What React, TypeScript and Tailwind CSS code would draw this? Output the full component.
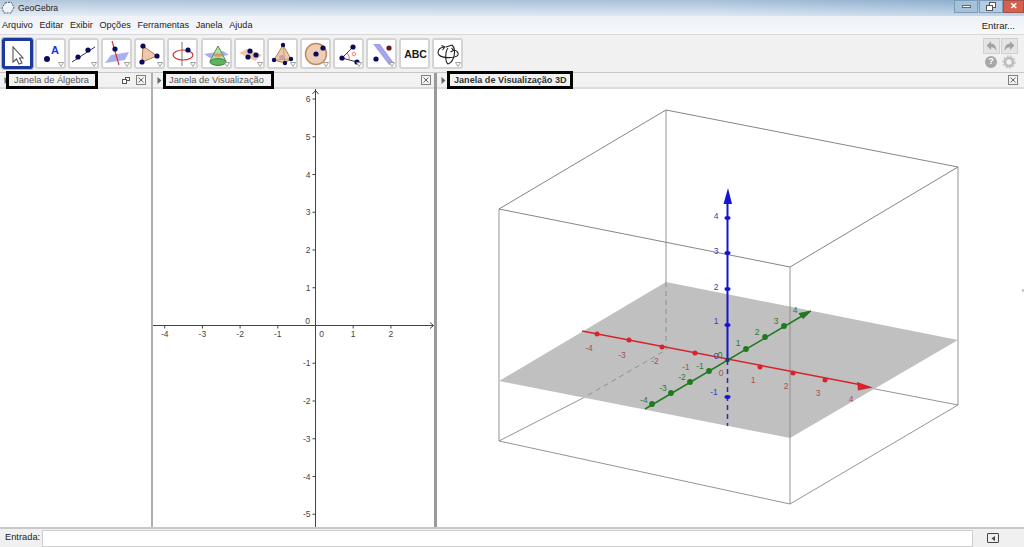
import React from "react";

const N = "#0b0b5e";
const Dot = ({ x, y, r = 2.6, c = N }: { x: number; y: number; r?: number; c?: string }) => <circle cx={x} cy={y} r={r} fill={c} />;

const icons: React.ReactNode[] = [
  <path key="a" d="M11 9 L11 24 L14.5 21 L17 26 L20 25 L17.5 20 L21 20 Z" fill="#fff" stroke="#555" strokeWidth="1.1" />,
  <g key="b"><Dot x={12} y={21} r={3} /><text x={20} y={16} textAnchor="middle" fontSize="11" fontWeight="700" fill="#2036d8" fontFamily="Liberation Sans">A</text></g>,
  <g key="c"><path d="M4 24 L27 9" stroke="#333" strokeWidth="1" /><Dot x={10} y={19} /><Dot x={20} y={12} /></g>,
  <g key="d"><path d="M4 25 L10 17 L28 14 L24 22 Z" fill="#aab0ee" /><path d="M11 3 L18 27" stroke="#d82c2c" strokeWidth="1.1" /><Dot x={14} y={11} /></g>,
  <g key="e"><path d="M9 8 L23 18 L8 24 Z" fill="#ecc9ae" stroke="#b5754c" strokeWidth="1" /><Dot x={9} y={8} /><Dot x={23} y={18} /><Dot x={8} y={24} /></g>,
  <g key="f"><ellipse cx={16} cy={17} rx={10} ry={5} fill="none" stroke="#d82c2c" strokeWidth="1.2" /><path d="M15 4 L15 28" stroke="#666" strokeWidth="0.9" /><Dot x={21} y={12} /></g>,
  <g key="g"><path d="M3 16 L22 13 L28 17 L9 20 Z" fill="#a8aef0" /><path d="M17 8 L9 23 A8 4 0 0 0 25 23 Z" fill="#b7dcae" stroke="#3c8c3c" strokeWidth="0.9" /><ellipse cx={17} cy={17} rx={4.5} ry={1.8} fill="#d9946e" /><ellipse cx={17} cy={24} rx={8} ry={3.4} fill="#5fb45f" stroke="#2a7a2a" strokeWidth="0.8" /></g>,
  <g key="h"><path d="M5 15 L13 11 L28 17 L21 23 Z" fill="#ecc9ae" /><Dot x={14} y={19} /><Dot x={16} y={13} /><Dot x={22} y={17} /></g>,
  <g key="i"><path d="M16 7 L7 22 L18 25 L24 21 Z" fill="#ecc9ae" stroke="#a07a30" strokeWidth="0.9" /><path d="M16 7 L18 25 M7 22 L24 21" stroke="#b98a30" strokeWidth="0.6" /><ellipse cx={15} cy={19} rx={3} ry={2} fill="#c9a0b0" /><Dot x={16} y={7} r={2.2} /><Dot x={7} y={22} r={2.2} /><Dot x={24} y={21} r={2.2} /><Dot x={18} y={25} r={2.2} /></g>,
  <g key="j"><circle cx={16} cy={16} r={10.5} fill="#efcdb5" stroke="#c08a64" strokeWidth="1.5" /><Dot x={16} y={16} /><Dot x={23} y={10} /></g>,
  <g key="k"><path d="M20 9 L9 20 L24 24" fill="none" stroke="#333" strokeWidth="1" /><path d="M14 15 A7 7 0 0 1 16 22" fill="none" stroke="#e05050" strokeWidth="0.9" /><circle cx={21} cy={16} r={1.8} fill="none" stroke="#e88" strokeWidth="1" /><Dot x={20} y={9} /><Dot x={9} y={20} /><Dot x={24} y={24} /></g>,
  <g key="l"><path d="M7 6 L14 6 L28 25 L23 27 Z" fill="#a4a4ea" /><Dot x={23} y={10} c="#6b1818" /><Dot x={10} y={21} /></g>,
  <text key="m" x={16.5} y={20} textAnchor="middle" fontSize="10.5" fontWeight="700" fill="#1a1a1a" fontFamily="Liberation Sans">ABC</text>,
  <g key="n" fill="none" stroke="#222" strokeWidth="1.1"><path d="M12 9 C6 10 5 14 7 17 C11 21 24 20 26 17 C27 14 24 12 21 12" /><path d="M20 7 C25 12 22 24 16 26 C13 24 13 14 16 10" /><path d="M9.5 7.5 L13 9 L10.5 12 M19.5 10 L21.5 12.5 L18.5 14 M14 9 L20 7" /></g>,
];

const Arrow = () => (
  <svg width="6" height="5" viewBox="0 0 6 5" className="absolute right-[0px] bottom-[0px]">
    <path d="M0.5 0.5 H5.5 L3 4.5 Z" fill="#fff" stroke="#8a8a8a" strokeWidth="0.8" />
  </svg>
);

const withArrow = [false, true, true, true, true, true, true, true, true, true, true, true, false, true];

function ToolButton({ i }: { i: number }) {
  const active = i === 0;
  return (
    <div className={active
      ? "relative w-[31px] h-[31px] bg-white border-[3px] border-[#1c3a9e] rounded-[2px] outline outline-1 outline-[#8fc0e6] shrink-0"
      : "relative w-[31px] h-[31px] bg-white border-2 border-[#d4d4d4] rounded-[3px] shrink-0"}>
      <svg viewBox="0 0 31 31" className={active ? "absolute left-[-3px] top-[-3px] w-[31px] h-[31px]" : "absolute left-[-2px] top-[-2px] w-[31px] h-[31px]"}>{icons[i]}</svg>
      {withArrow[i] && <Arrow />}
    </div>
  );
}

const CloseBox = () => (
  <div className="w-[10px] h-[10px] border border-[#808080] bg-[#f4f4f4] flex items-center justify-center shrink-0">
    <svg width="6" height="6" viewBox="0 0 6 6"><path d="M0.5 0.5 L5.5 5.5 M5.5 0.5 L0.5 5.5" stroke="#555" strokeWidth="0.9" /></svg>
  </div>
);

const Tri = () => (
  <svg width="5" height="7" viewBox="0 0 5 7" className="shrink-0"><path d="M0.5 0 L4.5 3.5 L0.5 7 Z" fill="#666" /></svg>
);

function PanelHeader({ title, box, pr, bold, dock }: { title: string; box: string; pr: string; bold?: boolean; dock?: boolean }) {
  return (
    <div className={`relative h-[16px] bg-[#f2f2f2] border-b-2 border-[#dcdcdc] flex items-center pl-[4px] shrink-0 ${pr}`}>
      <Tri />
      <div className={`absolute top-[-2px] h-[18px] border-[3px] border-black bg-[#f2f2f2] flex items-center pt-[1px] ${box}`}>
        <span className={bold ? "text-[9.1px] font-bold text-[#333] whitespace-nowrap leading-none" : "text-[9.3px] text-[#555] whitespace-nowrap leading-none"}>{title}</span>
      </div>
      <div className="flex-1" />
      {dock && (
        <svg width="8" height="7" viewBox="0 0 8 7" className="mr-[6px]"><rect x="3.5" y="0.5" width="4" height="3" fill="#fff" stroke="#555" /><rect x="0.5" y="2.5" width="4" height="4" fill="#fff" stroke="#555" /></svg>
      )}
      <CloseBox />
    </div>
  );
}

const SANS = "Liberation Sans, Arial, sans-serif";

function Graph2D() {
  const ox = 162.5, oy = 236.5;
  const sx = 37.7, sy = 37.75;
  const xs = [-4, -3, -2, -1, 1, 2];
  const ys = [6, 5, 4, 3, 2, 1, -1, -2, -3, -4, -5];
  return (
    <svg viewBox="0 0 281 438" className="block w-full h-full" fontFamily={SANS} fontSize="8.5" fill="#444">
      <path d={`M0 ${oy} H280 M${ox} 0 V438`} stroke="#444" strokeWidth="1" />
      <path d={`M277 ${oy - 3} L280.5 ${oy} L277 ${oy + 3} M${ox - 3} 5 L${ox} 1.5 L${ox + 3} 5`} stroke="#444" fill="none" />
      {xs.map((v) => (
        <g key={v}>
          <path d={`M${ox + v * sx} ${oy} v3`} stroke="#444" />
          <text x={ox + v * sx} y={oy + 11} textAnchor="middle">{v}</text>
        </g>
      ))}
      {ys.map((v) => (
        <g key={v}>
          <path d={`M${ox} ${oy - v * sy} h-3`} stroke="#444" />
          <text x={ox - 5} y={oy - v * sy + 3} textAnchor="end">{v}</text>
        </g>
      ))}
      <text x={ox - 8} y={oy - 2} textAnchor="middle">0</text>
      <text x={ox + 6} y={oy + 11} textAnchor="middle">0</text>
    </svg>
  );
}

function Graph3D() {
  const red: [number, number, string][] = [[597, 334, "-4"], [629, 340, "-3"], [662, 347, "-2"], [695, 353, "-1"], [760, 367, "1"], [793, 373, "2"], [825, 380, "3"]];
  const green: [number, number][] = [[652, 404], [671, 393], [690, 382], [709, 371], [746, 349], [765, 337], [784, 326]];
  const blue = [218, 253, 289, 325, 397];
  const rl: [number, number, string][] = [[589, 351, "-4"], [622, 358, "-3"], [655, 364, "-2"], [686, 370, "-1"], [721, 376, "0"], [753, 383, "1"], [786, 389, "2"], [818, 396, "3"], [851, 402, "4"]];
  const gl: [number, number, string][] = [[644, 403, "-4"], [663, 391, "-3"], [682, 380, "-2"], [700, 369, "-1"], [720, 358, "0"], [738, 346, "1"], [757, 335, "2"], [776, 324, "3"], [795, 313, "4"]];
  const bl: [number, number, string][] = [[716, 219, "4"], [716, 254, "3"], [716, 290, "2"], [716, 324, "1"], [716, 359, "0"], [714, 395, "-1"]];
  const R = "#d8232a", G = "#1f7a1f", B = "#1414d2";
  return (
    <svg viewBox="437 89 587 438" className="block w-full h-full" fontFamily={SANS} fontSize="8.5">
      <path d="M666 110 L958 167 L790 267 L499 209 Z" fill="none" stroke="#777" strokeWidth="0.9" />
      <path d="M666 110 V282 M499 209 V441 L585 397 M958 167 V405 L870 388" fill="none" stroke="#888" strokeWidth="0.9" />
      <path d="M666 282 L958 340 L790 438 L499 381 Z" fill="#c0c0c0" />
      <path d="M666 282 V350 L585 397" fill="none" stroke="#8a8a8a" strokeWidth="0.9" strokeDasharray="5 4" />
      <path d="M790 267 V504 M499 441 L790 504 L958 405" fill="none" stroke="#888" strokeWidth="0.9" />
      <path d="M582 331 L862 385" stroke={R} strokeWidth="1.5" />
      <path d="M857 382 L873 387.5 L858 390.5 Z" fill={R} />
      <path d="M645 409 L802 316" stroke={G} strokeWidth="1.5" />
      <path d="M799 313.5 L811 311 L803 318.5 Z" fill={G} stroke={G} strokeWidth="1" />
      <path d="M727.5 200 V360" stroke={B} strokeWidth="2" />
      <path d="M727.5 360 V426" stroke="#2a2ab8" strokeWidth="1.5" strokeDasharray="5 4" />
      <path d="M723.5 204 L728 188 L732 204 Z" fill={B} />
      {red.map(([x, y, k]) => <circle key={k} cx={x} cy={y} r="2.5" fill={R} />)}
      {green.map(([x, y]) => <circle key={x} cx={x} cy={y} r="2.9" fill={G} />)}
      {blue.map((y) => <ellipse key={y} cx={727.5} cy={y} rx="3" ry="1.9" fill={B} />)}
      <circle cx={727.5} cy={360} r="2.2" fill="#14406a" />
      {rl.map(([x, y, t]) => <text key={t} x={x} y={y} textAnchor="middle" fill="#a85050">{t}</text>)}
      {gl.map(([x, y, t]) => <text key={t} x={x} y={y} textAnchor="middle" fill="#2e7a2e">{t}</text>)}
      {bl.map(([x, y, t]) => <text key={t} x={x} y={y} textAnchor="middle" fill="#3a3ac8">{t}</text>)}
    </svg>
  );
}

export default function App() {
  return (
    <div className="w-[1024px] h-[547px] overflow-hidden flex flex-col bg-white text-[#222]" style={{ fontFamily: SANS }}>
      <div className="h-[16px] shrink-0 flex items-center relative bg-[linear-gradient(to_bottom,rgba(120,150,185,0.35),rgba(255,255,255,0.45)),linear-gradient(to_right,#cfdfee,#c0d5e9_70%,#8fb3d4)]">
        <svg width="14" height="14" viewBox="0 0 14 14" className="ml-[1px]"><path d="M4 2 L10 1 L13 6 L10 12 L3 12 L1 7 Z" fill="#eef3f8" stroke="#445" strokeWidth="0.9" strokeDasharray="2 1" /></svg>
        <span className="ml-[3px] text-[8.6px] text-[#222]">GeoGebra</span>
        <div className="flex-1" />
        <div className="flex h-[13px] self-start">
          <div className="w-[24px] h-full bg-[#a4c2dc] border border-[#7d9cb8] flex items-center justify-center mr-[1px]"><div className="w-[9px] h-[3px] bg-white border border-[#666]" /></div>
          <div className="w-[24px] h-full bg-[#b2cde3] border border-[#7d9cb8] flex items-center justify-center"><svg width="10" height="9" viewBox="0 0 10 9"><rect x="3.5" y="0.5" width="6" height="5" fill="#fff" stroke="#555" /><rect x="0.5" y="3.5" width="6" height="5" fill="#fff" stroke="#555" /></svg></div>
          <div className="w-[21px] h-full bg-[#d4604e] border border-[#a85046] flex items-center justify-center text-white text-[9px] font-bold leading-none">✕</div>
        </div>
      </div>

      <div className="h-[18px] shrink-0 bg-gradient-to-b from-[#edf2f8] to-[#f6f8fb] flex items-center pl-[2px] pr-[9px] pt-[2px] gap-[6.7px] text-[9.1px] text-[#222]">
        {["Arquivo", "Editar", "Exibir", "Opções", "Ferramentas", "Janela", "Ajuda"].map((m) => <span key={m}>{m}</span>)}
        <div className="flex-1" />
        <span className="text-[9.5px]">Entrar...</span>
      </div>

      <div className="h-[38px] shrink-0 bg-[#f1f1f1] border-t border-[#d8d8d8] flex items-center pl-[2px] pr-[6px] gap-[2.1px]">
        {icons.map((_, i) => <ToolButton key={i} i={i} />)}
        <div className="flex-1" />
        <div className="flex flex-col items-center gap-[1px] mt-[-1px]">
          <div className="flex gap-[1px]">
            {["M3 7 L8 2 V5 C12 5 14 8 14 13 C12 10 11 9 8 9 V12 Z", "M14 7 L9 2 V5 C5 5 3 8 3 13 C5 10 6 9 9 9 V12 Z"].map((d) => (
              <div key={d} className="w-[17px] h-[16px] bg-[#e4e4e4] border border-[#d0d0d0] flex items-center justify-center">
                <svg width="15" height="14" viewBox="0 0 17 15"><path d={d} fill="#a2a2a2" /></svg>
              </div>
            ))}
          </div>
          <div className="flex gap-[5px] items-center">
            <div className="w-[12px] h-[12px] rounded-full bg-[#a8a8a8] text-white text-[9px] font-bold flex items-center justify-center leading-none">?</div>
            <svg width="14" height="14" viewBox="0 0 14 14"><circle cx="7" cy="7" r="4" fill="none" stroke="#bcbcbc" strokeWidth="2.6" /><circle cx="7" cy="7" r="6" fill="none" stroke="#cacaca" strokeWidth="1.6" strokeDasharray="2 1.6" /></svg>
          </div>
        </div>
      </div>

      <div className="flex-1 min-h-0 flex border-t border-[#c8c8c8]">
        <div className="w-[151px] shrink-0 flex flex-col">
          <PanelHeader title="Janela de Álgebra" box="w-[92px] left-[6px] pl-[5px]" pr="pr-[5px]" dock />
          <div className="flex-1 bg-white" />
        </div>
        <div className="w-[2px] shrink-0 bg-[#b0b0b0]" />
        <div className="w-[281px] shrink-0 flex flex-col">
          <PanelHeader title="Janela de Visualização" box="w-[111px] left-[10px] pl-[3px]" pr="pr-[3px]" />
          <div className="flex-1 min-h-0 bg-white"><Graph2D /></div>
        </div>
        <div className="w-[3px] shrink-0 bg-[#9a9a9a]" />
        <div className="flex-1 min-w-0 flex flex-col relative">
          <PanelHeader title="Janela de Visualização 3D" bold box="w-[126px] left-[10px] pl-[4px]" pr="pr-[6px]" />
          <div className="flex-1 min-h-0 bg-white"><Graph3D /></div>
          <div className="absolute right-0 top-[214px] text-[7px] text-[#666] leading-none">‹</div>
        </div>
      </div>

      <div className="h-[20px] shrink-0 bg-[#f0f0f0] border-t-2 border-[#c8c8c8] flex items-center pl-[5px] pr-[25px]">
        <span className="text-[9.3px] text-[#222] mr-[2px]">Entrada:</span>
        <div className="w-[931px] h-[17px] bg-white border border-[#cfcfcf]" />
        <div className="flex-1" />
        <div className="w-[12px] h-[10px] border border-[#444] rounded-[1px] bg-[#eee] flex items-center justify-center">
          <svg width="5" height="5" viewBox="0 0 5 5"><path d="M4 0 L0.5 2.5 L4 5 Z" fill="#444" /></svg>
        </div>
      </div>
    </div>
  );
}
